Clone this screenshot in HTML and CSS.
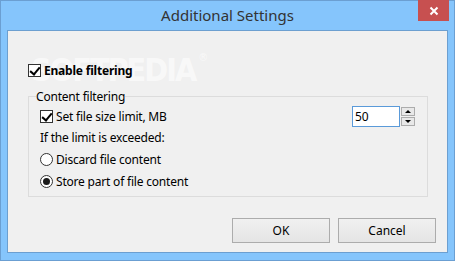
FILE: index.html
```html
<!DOCTYPE html>
<html lang="en">
<head>
    <meta charset="UTF-8">
    <title>Additional Settings</title>
    <link rel="stylesheet" href="styles.css">
</head>
<body>
    <div class="window">
        <div class="titlebar">
            <div></div>
            <div class="title">Additional Settings</div>
            <div class="close-btn">
                <svg width="10" height="10" viewBox="0 0 10 10">
                    <path d="M1.5 1.5 L8.5 8.5 M8.5 1.5 L1.5 8.5" stroke="#fff" stroke-width="2"/>
                </svg>
            </div>
        </div>

        <div class="client">
            <div class="watermark">SOFTPEDIA<sup>®</sup></div>

            <label class="option bold enable-row">
                <span class="check checked"></span>
                Enable filtering
            </label>

            <fieldset class="group">
                <legend>Content filtering</legend>

                <div class="limit-row">
                    <label class="option">
                        <span class="check checked"></span>
                        Set file size limit, MB
                    </label>
                    <div class="spinner">
                        <div class="spin-input">50</div>
                        <div class="spin-buttons">
                            <div class="spin-btn"><span class="arrow-up"></span></div>
                            <div class="spin-btn"><span class="arrow-down"></span></div>
                        </div>
                    </div>
                </div>

                <div class="plain-row">If the limit is exceeded:</div>

                <label class="option radio-row">
                    <span class="radio"></span>
                    Discard file content
                </label>
                <label class="option radio-row">
                    <span class="radio selected"></span>
                    Store part of file content
                </label>
            </fieldset>

            <div class="buttons">
                <button class="btn">OK</button>
                <button class="btn">Cancel</button>
            </div>
        </div>
    </div>
</body>
</html>
```

FILE: styles.css
```css
* {
    box-sizing: border-box;
}

body {
    margin: 0;
    font-family: "Noto Sans", "Open Sans", sans-serif;
    font-size: 12px;
    letter-spacing: -0.2px;
    color: #000;
}

.window {
    width: 455px;
    height: 261px;
    background: #85c5fc;
    border: 1px solid #6b9fd2;
    display: flex;
    flex-direction: column;
}

.titlebar {
    height: 29px;
    display: grid;
    grid-template-columns: 1fr auto 1fr;
    align-items: start;
}

.title {
    font-size: 15px;
    letter-spacing: 0;
    color: #333;
    line-height: 29px;
}

.close-btn {
    justify-self: end;
    width: 31px;
    height: 21px;
    margin-top: -1px;
    margin-right: 5px;
    background: #c75050;
    display: flex;
    align-items: center;
    justify-content: center;
}

.client {
    position: relative;
    flex: 1;
    margin: 0 6px 7px 6px;
    background: #f0f0f0;
    border: 1px solid #6c9fd0;
    padding: 31px 19px 0 20px;
    display: flex;
    flex-direction: column;
}

.watermark {
    position: absolute;
    left: 23px;
    top: 20px;
    font-family: "DejaVu Sans Condensed", "DejaVu Sans", sans-serif;
    font-weight: bold;
    font-size: 32px;
    letter-spacing: -2px;
    color: rgba(255, 255, 255, 0.6);
    pointer-events: none;
}

.watermark sup {
    font-size: 11px;
    font-weight: normal;
    vertical-align: 20px;
    margin-left: 3px;
}

.option {
    position: relative;
    z-index: 1;
    display: flex;
    align-items: center;
    gap: 3px;
    height: 17px;
    white-space: nowrap;
}

.bold {
    font-weight: bold;
}

.check,
.radio {
    width: 13px;
    height: 13px;
    flex: none;
    background: #fff;
    border: 1px solid #333;
    position: relative;
}

.check.checked::after {
    content: '';
    position: absolute;
    left: 3px;
    top: 0px;
    width: 4px;
    height: 8px;
    border: solid #000;
    border-width: 0 2px 2px 0;
    transform: rotate(40deg);
}

.radio {
    border-radius: 50%;
    display: flex;
    align-items: center;
    justify-content: center;
}

.radio.selected::after {
    content: '';
    width: 7px;
    height: 7px;
    border-radius: 50%;
    background: #1a1a1a;
}

.group {
    position: relative;
    z-index: 1;
    margin: 9px 0 0 0;
    padding: 0 12px 4px 11px;
    border: 1px solid #dcdcdc;
    border-radius: 0;
    min-width: 0;
}

.group legend {
    padding: 0;
    margin-left: -4px;
    line-height: 17px;
}

.limit-row {
    display: flex;
    align-items: center;
    justify-content: space-between;
    height: 21px;
    margin-top: 1px;
}

.spinner {
    display: flex;
    align-items: center;
    gap: 1px;
}

.spin-input {
    width: 48px;
    height: 21px;
    background: #fff;
    border: 1px solid #5a9ad9;
    padding-left: 2px;
    line-height: 19px;
}

.spin-buttons {
    display: flex;
    flex-direction: column;
    gap: 1px;
}

.spin-btn {
    width: 14px;
    height: 9px;
    background: #e8e8e8;
    border: 1px solid #acacac;
    display: flex;
    align-items: center;
    justify-content: center;
}

.arrow-up {
    border-left: 3px solid transparent;
    border-right: 3px solid transparent;
    border-bottom: 3px solid #000;
}

.arrow-down {
    border-left: 3px solid transparent;
    border-right: 3px solid transparent;
    border-top: 3px solid #000;
}

.plain-row {
    height: 21px;
    line-height: 21px;
}

.radio-row {
    height: 22px;
}

.buttons {
    display: flex;
    justify-content: flex-end;
    gap: 8px;
    margin-top: 21px;
    margin-right: -8px;
}

.btn {
    width: 98px;
    height: 25px;
    font-family: inherit;
    font-size: 12px;
    color: #000;
    border: 1px solid #acacac;
    background: linear-gradient(#f0f0f0, #e5e5e5);
    padding: 0;
}
```
